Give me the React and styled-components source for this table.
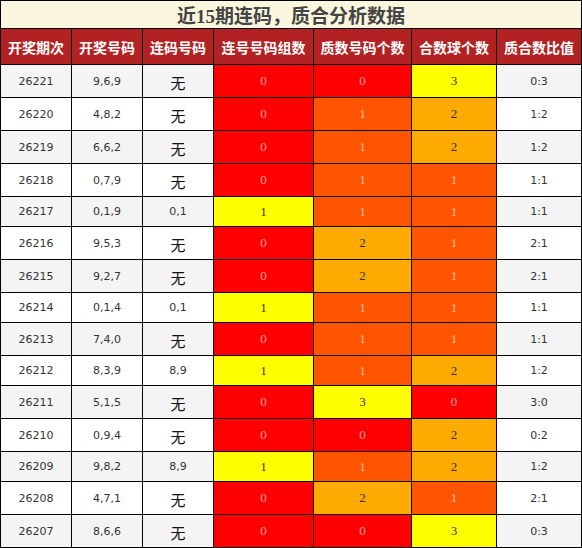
import React from "react";
import styled, { createGlobalStyle } from "styled-components";

const GlobalStyle = createGlobalStyle`
  body {
    margin: 0;
    background: #fff;
    font-family: "DejaVu Sans", "Noto Sans CJK SC", sans-serif;
  }
`;

const rows = [
  ["26221", "9,6,9", "无", 0, 0, 3, "0:3"],
  ["26220", "4,8,2", "无", 0, 1, 2, "1:2"],
  ["26219", "6,6,2", "无", 0, 1, 2, "1:2"],
  ["26218", "0,7,9", "无", 0, 1, 1, "1:1"],
  ["26217", "0,1,9", "0,1", 1, 1, 1, "1:1"],
  ["26216", "9,5,3", "无", 0, 2, 1, "2:1"],
  ["26215", "9,2,7", "无", 0, 2, 1, "2:1"],
  ["26214", "0,1,4", "0,1", 1, 1, 1, "1:1"],
  ["26213", "7,4,0", "无", 0, 1, 1, "1:1"],
  ["26212", "8,3,9", "8,9", 1, 1, 2, "1:2"],
  ["26211", "5,1,5", "无", 0, 3, 0, "3:0"],
  ["26210", "0,9,4", "无", 0, 0, 2, "0:2"],
  ["26209", "9,8,2", "8,9", 1, 1, 2, "1:2"],
  ["26208", "4,7,1", "无", 0, 2, 1, "2:1"],
  ["26207", "8,6,6", "无", 0, 0, 3, "0:3"],
];

const headers = [
  "开奖期次",
  "开奖号码",
  "连码号码",
  "连号号码组数",
  "质数号码个数",
  "合数球个数",
  "质合数比值",
];

// level colours: 0 red, 1 orange-red, 2 orange, 3 yellow
const levels = [
  { bg: "#ff0000", fg: "#ffa0a0" },
  { bg: "#ff5500", fg: "#ffbfa0" },
  { bg: "#ffaa00", fg: "#333333" },
  { bg: "#ffff00", fg: "#333333" },
];

const Table = styled.div`
  width: 582px;
  box-sizing: border-box;
  border-left: 1px solid #000;
  border-top: 1px solid #000;
  display: grid;
  grid-template-columns: 71px 71px 71px 100px 98px 85px 85px;
`;

const Title = styled.div`
  grid-column: 1 / -1;
  height: 28px;
  box-sizing: border-box;
  border-right: 1px solid #000;
  border-bottom: 1px solid #000;
  background: #faf7de;
  color: #444;
  font-family: "Liberation Serif", "Noto Sans CJK SC", serif;
  font-weight: bold;
  font-size: 19px;
  display: flex;
  align-items: center;
  justify-content: center;
  padding-bottom: 1px;
`;

const Head = styled.div`
  height: 36px;
  box-sizing: border-box;
  border-right: 1px solid #000;
  border-bottom: 1px solid #000;
  background: #b22222;
  color: #fff;
  font-family: "Noto Sans CJK SC", sans-serif;
  font-weight: bold;
  font-size: 14px;
  display: flex;
  align-items: center;
  justify-content: center;
  white-space: nowrap;
`;

const Cell = styled.div`
  height: ${(p) => (p.$tall ? 33 : 30)}px;
  box-sizing: border-box;
  border-right: 1px solid #000;
  border-bottom: 1px solid #000;
  background: ${(p) => p.$bg};
  color: ${(p) => p.$fg || "#333"};
  font-family: "DejaVu Sans", "Noto Sans CJK SC", sans-serif;
  font-size: 11px;
  display: flex;
  align-items: center;
  justify-content: center;
`;

const Wu = styled.span`
  font-family: "Noto Sans CJK SC", sans-serif;
  font-size: 15px;
  color: #111;
  padding-top: 3px;
`;

const Level = styled(Cell)`
  font-family: "Liberation Serif", serif;
  font-size: 13px;
`;

export default function App() {
  return (
    <>
      <GlobalStyle />
      <Table>
        <Title>近15期连码，质合分析数据</Title>
        {headers.map((h) => (
          <Head key={h}>{h}</Head>
        ))}
        {rows.map((r, i) => {
          const tall = r[2] === "无";
          const bg = i % 2 === 0 ? "#f4f4f4" : "#ffffff";
          const lianLevel = levels[r[3] === 1 ? 3 : 0];
          return (
            <React.Fragment key={r[0]}>
              <Cell $tall={tall} $bg={bg}>{r[0]}</Cell>
              <Cell $tall={tall} $bg={bg}>{r[1]}</Cell>
              <Cell $tall={tall} $bg={bg}>
                {tall ? <Wu>无</Wu> : r[2]}
              </Cell>
              <Level $tall={tall} $bg={lianLevel.bg} $fg={lianLevel.fg}>
                {r[3]}
              </Level>
              <Level $tall={tall} $bg={levels[r[4]].bg} $fg={levels[r[4]].fg}>
                {r[4]}
              </Level>
              <Level $tall={tall} $bg={levels[r[5]].bg} $fg={levels[r[5]].fg}>
                {r[5]}
              </Level>
              <Cell $tall={tall} $bg={bg}>{r[6]}</Cell>
            </React.Fragment>
          );
        })}
      </Table>
    </>
  );
}
